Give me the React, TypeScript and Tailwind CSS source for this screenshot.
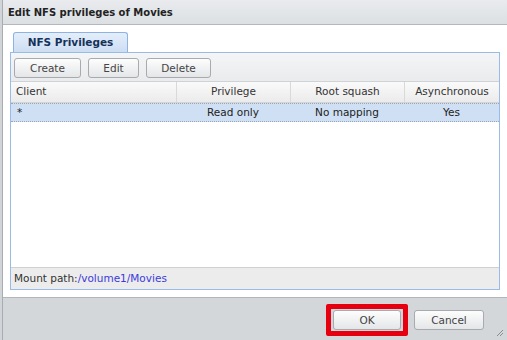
import { ReactNode } from "react";

// Edit NFS privileges dialog
const rows = [{ client: "*", privilege: "Read only", squash: "No mapping", async: "Yes" }];

const Btn = ({ children, className = "" }: { children: ReactNode; className?: string }) => (
  <button
    className={`h-[20px] rounded-[3px] border border-[#a7abaf] bg-gradient-to-b from-[#fdfdfd] to-[#e4e6e8] text-[10.5px] text-[#444] leading-none ${className}`}
  >
    {children}
  </button>
);

const App = () => {
  return (
    <div
      className="w-[507px] h-[340px] flex flex-col bg-white border-l-2 border-[#d2d5d8] overflow-hidden"
      style={{ fontFamily: '"DejaVu Sans", Verdana, sans-serif' }}
    >
      <div className="flex flex-col flex-1 border-l border-[#a9adb1]">
        {/* Title bar */}
        <div className="h-[25px] shrink-0 flex items-center pl-[5px] bg-gradient-to-b from-[#e9ebee] to-[#dde0e3] border-b border-[#b4b8bc]">
          <span className="text-[10px] font-bold text-[#222]">Edit NFS privileges of Movies</span>
        </div>

        {/* Body */}
        <div className="h-[272px] shrink-0 flex flex-col pt-[7px] pl-[7px] pr-[7px] pb-[7px] bg-white">
          <div className="h-[20px] flex pl-[3px]">
            <div className="w-[115px] h-[20px] rounded-t-[3px] border border-b-0 border-[#8db2e3] bg-gradient-to-b from-[#e4eefa] to-[#cddef3] flex items-center justify-center text-[10.5px] font-bold text-[#15325a]">
              NFS Privileges
            </div>
          </div>

          <div className="flex-1 flex flex-col border border-[#99bbe8]">
            {/* Toolbar */}
            <div className="h-[29px] shrink-0 flex items-start gap-[7px] pt-[5px] pl-[3px] bg-gradient-to-b from-[#f4f5f6] to-[#e9ebed] border-b border-[#d0d3d6]">
              <Btn className="w-[67px]">Create</Btn>
              <Btn className="w-[51px]">Edit</Btn>
              <Btn className="w-[65px]">Delete</Btn>
            </div>

            {/* Header */}
            <div className="grid grid-cols-[165px_114px_114px_95px] h-[21px] shrink-0 bg-gradient-to-b from-[#fafafa] to-[#ebebeb] border-b border-[#d4d4d4] text-[10.5px] text-[#333]">
              <div className="flex items-center pl-[5px]">Client</div>
              <div className="flex items-center justify-center border-l border-[#d9d9d9]">Privilege</div>
              <div className="flex items-center justify-center border-l border-[#d9d9d9]">Root squash</div>
              <div className="flex items-center justify-center border-l border-[#d9d9d9]">Asynchronous</div>
            </div>

            {/* Rows */}
            <div className="flex-1 bg-white">
              {rows.map((r) => (
                <div
                  key={r.client}
                  className="grid grid-cols-[165px_114px_114px_95px] h-[19px] bg-[#cfe0f4] border-y border-dotted border-[#9aa6b3] text-[10.5px] text-[#222]"
                >
                  <div className="flex items-center pl-[6px]">{r.client}</div>
                  <div className="flex items-center justify-center">{r.privilege}</div>
                  <div className="flex items-center justify-center">{r.squash}</div>
                  <div className="flex items-center justify-center">{r.async}</div>
                </div>
              ))}
            </div>

            {/* Mount path */}
            <div className="h-[22px] shrink-0 flex items-center pl-[3px] bg-[#ececec] border-t border-[#d0d0d0] text-[10.5px]">
              <span className="text-[#333]">Mount path:</span>
              <span className="text-[#3b3bdc]">/volume1/Movies</span>
            </div>
          </div>
        </div>

        {/* Footer */}
        <div className="relative flex-1 flex justify-end items-start gap-[13px] pt-[12px] pr-[23px] bg-[#d4d7da] border-t border-[#b3b7bb]">
          <span className="relative flex">
            <Btn className="w-[68px]">OK</Btn>
            {/* highlight box */}
            <span className="absolute -left-[7px] -right-[7px] -top-[6px] -bottom-[6px] border-[5px] border-[#e6000f] rounded-[2px] pointer-events-none" />
          </span>
          <Btn className="w-[70px]">Cancel</Btn>
          <svg className="absolute right-[3px] bottom-[3px]" width="9" height="9" viewBox="0 0 9 9">
            <path d="M8 2 L2 8 M8 5 L5 8" stroke="#8a8e92" strokeWidth="1" />
          </svg>
        </div>
      </div>
    </div>
  );
};

export default App;
